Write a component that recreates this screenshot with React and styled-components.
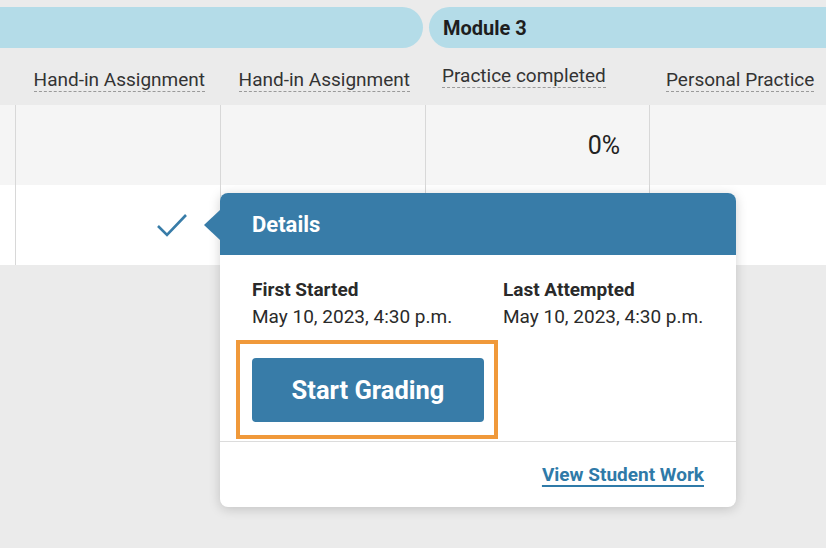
import React from 'react';
import styled, { createGlobalStyle } from 'styled-components';

const GlobalStyle = createGlobalStyle`
  html, body {
    margin: 0;
    padding: 0;
    background: #ebebeb;
    font-family: Roboto, 'Liberation Sans', sans-serif;
    color: #222;
  }
`;

const Page = styled.div`
  position: relative;
  width: 826px;
  height: 548px;
  overflow: hidden;
  background: #ebebeb;
`;

const ModuleBar = styled.div`
  display: flex;
  gap: 6px;
  padding-top: 7px;
  height: 41px;
`;

const ModulePill = styled.div`
  flex: 0 0 ${(p) => p.width}px;
  margin-left: ${(p) => p.offset || 0}px;
  height: 41px;
  border-radius: 21px;
  background: #b4dce8;
  display: flex;
  align-items: center;
  padding-left: 14px;
  box-sizing: border-box;
  font-size: 20px;
  font-weight: 700;
  color: #1e1e1e;
`;

const COLS = '15px 205px 205px 224px 1fr';

const HeaderRow = styled.div`
  display: grid;
  grid-template-columns: ${COLS};
  height: 57px;
`;

const HeaderCell = styled.div`
  display: flex;
  align-items: flex-end;
  justify-content: ${(p) => (p.align === 'right' ? 'flex-end' : 'flex-start')};
  padding: 0 15px 13px 17px;
`;

const HeaderLabel = styled.span`
  font-size: 19px;
  line-height: 22px;
  color: #333;
  white-space: nowrap;
  border-bottom: 1px dashed #9a9a9a;
  margin-bottom: ${(p) => (p.raised ? 4 : 0)}px;
`;

const Row = styled.div`
  display: grid;
  grid-template-columns: ${COLS};
  height: 80px;
  background: ${(p) => (p.striped ? '#f5f5f5' : '#fff')};
`;

const Cell = styled.div`
  display: flex;
  align-items: center;
  justify-content: flex-end;
  padding-right: ${(p) => p.pad || 0}px;
  border-left: ${(p) => (p.first ? 'none' : '1px solid #d8d8d8')};
  font-size: 25px;
  color: #222;
`;

const Popover = styled.div`
  position: absolute;
  left: 220px;
  top: 193px;
  width: 516px;
  height: 314px;
  background: #fff;
  border-radius: 8px;
  box-shadow: 0 2px 12px rgba(0, 0, 0, 0.18);
  display: flex;
  flex-direction: column;
`;

const PopHeader = styled.div`
  position: relative;
  height: 62px;
  background: #387ca8;
  border-radius: 8px 8px 0 0;
  display: flex;
  align-items: center;
  padding-left: 32px;
  font-size: 22px;
  font-weight: 700;
  color: #fff;

  &::before {
    content: '';
    position: absolute;
    left: -16px;
    top: 17px;
    width: 16px;
    height: 30px;
    background: #387ca8;
    clip-path: polygon(100% 0, 0 50%, 100% 100%);
  }
`;

const PopBody = styled.div`
  padding: 22px 32px 0;
  display: flex;
  flex-direction: column;
  align-items: flex-start;
`;

const InfoGrid = styled.div`
  display: grid;
  grid-template-columns: 251px 1fr;
  width: 100%;
`;

const InfoTitle = styled.div`
  font-size: 19px;
  line-height: 26px;
  font-weight: 700;
  color: #2a2a2a;
`;

const InfoValue = styled.div`
  font-size: 19px;
  line-height: 27px;
  color: #2a2a2a;
`;

const Highlight = styled.div`
  margin: 10px 0 0 -16px;
  padding: 14px 10px 13px 12px;
  border: 4px solid #f0993a;
`;

const PrimaryButton = styled.button`
  width: 232px;
  height: 64px;
  border: none;
  border-radius: 4px;
  background: #387ca8;
  color: #fff;
  font-family: Roboto, 'Liberation Sans', sans-serif;
  font-size: 25.5px;
  font-weight: 700;
  cursor: pointer;
`;

const PopFooter = styled.div`
  margin-top: 2px;
  border-top: 1px solid #dcdcdc;
  flex: 1;
  display: flex;
  align-items: center;
  justify-content: flex-end;
  padding-right: 32px;
`;

const FooterLink = styled.a`
  font-size: 19px;
  font-weight: 700;
  color: #2f7aa8;
  text-decoration: underline;
  text-decoration-thickness: 2px;
  text-underline-offset: 4px;
  cursor: pointer;
`;

const Check = () => (
  <svg width="32" height="24" viewBox="0 0 32 24" style={{ marginRight: 32 }}>
    <polyline points="2,13 11,22 30,2" fill="none" stroke="#387ca8" strokeWidth="2.6" />
  </svg>
);

export default function App() {
  return (
    <Page>
      <GlobalStyle />
      <ModuleBar>
        <ModulePill offset={-20} width={443} />
        <ModulePill width={420}>Module 3</ModulePill>
      </ModuleBar>

      <HeaderRow>
        <div />
        <HeaderCell align='right'>
          <HeaderLabel>Hand-in Assignment</HeaderLabel>
        </HeaderCell>
        <HeaderCell align='right'>
          <HeaderLabel>Hand-in Assignment</HeaderLabel>
        </HeaderCell>
        <HeaderCell>
          <HeaderLabel raised>Practice completed</HeaderLabel>
        </HeaderCell>
        <HeaderCell>
          <HeaderLabel>Personal Practice</HeaderLabel>
        </HeaderCell>
      </HeaderRow>

      <Row striped>
        <Cell first />
        <Cell />
        <Cell />
        <Cell pad={29}>0%</Cell>
        <Cell />
      </Row>
      <Row>
        <Cell first />
        <Cell>
          <Check />
        </Cell>
        <Cell />
        <Cell />
        <Cell />
      </Row>

      <Popover>
        <PopHeader>Details</PopHeader>
        <PopBody>
          <InfoGrid>
            <div>
              <InfoTitle>First Started</InfoTitle>
              <InfoValue>May 10, 2023, 4:30 p.m.</InfoValue>
            </div>
            <div>
              <InfoTitle>Last Attempted</InfoTitle>
              <InfoValue>May 10, 2023, 4:30 p.m.</InfoValue>
            </div>
          </InfoGrid>
          <Highlight>
            <PrimaryButton>Start Grading</PrimaryButton>
          </Highlight>
        </PopBody>
        <PopFooter>
          <FooterLink>View Student Work</FooterLink>
        </PopFooter>
      </Popover>
    </Page>
  );
}
